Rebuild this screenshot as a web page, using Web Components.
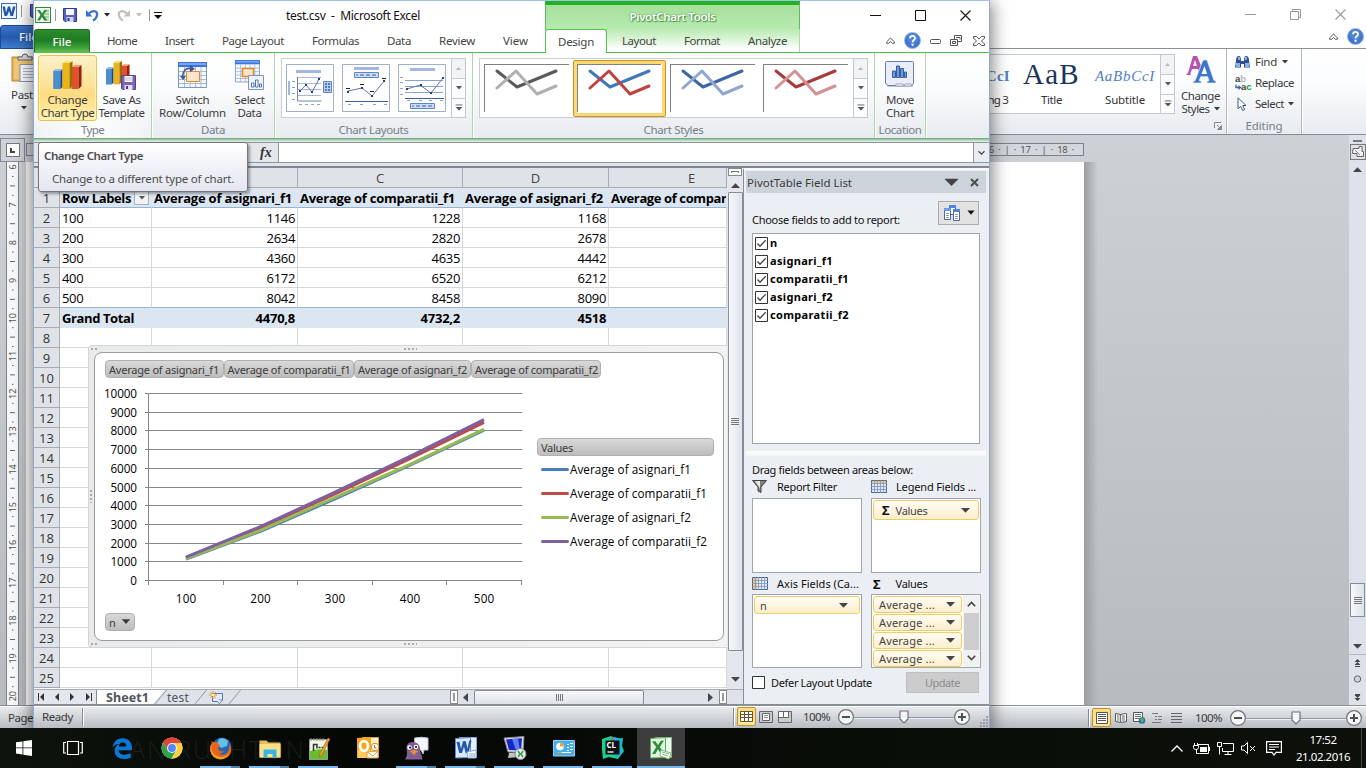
<!DOCTYPE html>
<html lang="en">
<head>
<meta charset="utf-8">
<title>test.csv - Microsoft Excel</title>
<style>
html,body{margin:0;height:100%;overflow:hidden;background:#000;font-family:"Noto Sans","Open Sans",sans-serif;font-size:11.5px;color:#3b3b3b}
</style>
</head>
<body>
<desktop-shell></desktop-shell>
<script>
const fits=[];
function def(name,css,html,setup){
  customElements.define(name,class extends HTMLElement{
    constructor(){
      super();
      const r=this.attachShadow({mode:"open"});
      const t=document.createElement("template");
      t.innerHTML="<style>*{box-sizing:border-box}"+css+"</style>"+(typeof html==="function"?html(this):html);
      r.appendChild(t.content.cloneNode(true));
      if(setup)setup(this,r);
    }
  });
}
/* label whose tracking is adjusted to a given width */
customElements.define("fit-text",class extends HTMLElement{
  constructor(){super();this.attachShadow({mode:"open"}).innerHTML="<style>:host{display:inline-block;white-space:pre;flex:none}</style><slot></slot>";}
  connectedCallback(){fits.push(this);}
});
const T=(w,s,st="")=>`<fit-text w="${w}" style="${st}">${s}</fit-text>`;

/* ---------- icons ---------- */
const bars3=(x,y,s)=>`<g transform="translate(${x} ${y}) scale(${s})"><path d="M0 11l3-2h6l-2 2v18H0z" fill="#3f74b5"/><path d="M0 11h7v18H0z" fill="#4d8ed0"/><path d="M7 11l2-2v18l-2 2z" fill="#1f4778"/><path d="M0 11l2-2h7l-2 2z" fill="#8ec0ee"/><path d="M18 7h7v22h-7z" fill="#e2502f"/><path d="M25 7l3-2v21l-3 3z" fill="#9a1e0c"/><path d="M18 7l3-2h7l-3 2z" fill="#f79a7c"/><path d="M9 3h7v26H9z" fill="#eab416"/><path d="M16 3l3-2v25l-3 3z" fill="#9c6d02"/><path d="M9 3l3-2h7l-3 2z" fill="#fbe070"/></g>`;
const tableIc=(x,y)=>`<g transform="translate(${x} ${y})"><path d="M.5.5h28v25h-28z" fill="#f6f9fe" stroke="#7c96bf"/><path d="M0 0h29v5H0z" fill="#3b74dc"/><path d="M1 1h27v2H1z" fill="#78a6f2"/><path d="M1 9.5h27M1 13.5h27M1 17.5h27M1 21.5h27M6.500 5v20M12 5v20M17.500 5v20M23 5v20" stroke="#a9bad4"/></g>`;
const I={
excel:[16,16,`<rect x=".5" y=".5" width="15" height="15" fill="#f4faf2" stroke="#2f8a3b"/><path d="M9 2h5v12H9z" fill="#d2ead0"/><path d="M10 4h4M10 7h4M10 10h4" stroke="#83bb83"/><path d="M2 3h3l2 3.500L9.500 3H12L8.500 8l4 5.500H9.300L7 10l-2.200 3.500H2L5.500 8z" fill="#2c8b37"/>`],
word:[16,16,`<rect x=".5" y=".5" width="15" height="15" fill="#eef5fe" stroke="#3a6fb8"/><path d="M1.500 3.500H4l1 6 2-6h2l1.500 6 1.500-6h2.500L12 13H9.500L8 8l-2 5H3.500z" fill="#2359a8"/>`],
save:[14,14,`<path d="M.5.5h13v13H2L.5 12z" fill="#5a5fc4" stroke="#34368f"/><path d="M3 1h8v6H3z" fill="#f3f6fd"/><path d="M3.500 9h7v5h-7z" fill="#cdd2ee"/><path d="M4.500 10h2v3h-2z" fill="#33368a"/>`],
undo:[13,12,`<path d="M3 4.500C7 .5 12 2 11 6.500 10.500 9 9 10.500 7 11.500" fill="none" stroke="#3d6fcf" stroke-width="2.200"/><path d="M0 1v6.500h6.500z" fill="#3d6fcf"/>`],
redo:[13,12,`<path d="M10 4.500C6 .5 1 2 2 6.500 2.500 9 4 10.500 6 11.500" fill="none" stroke="#c0c0c0" stroke-width="2.200"/><path d="M13 1v6.500H6.500z" fill="#c0c0c0"/>`],
dn:[6,4,`<path d="M0 0h6L3 3.500z" fill="currentColor"/>`],
dnw:[9,5,`<path d="M0 0h9L4.500 4.800z" fill="currentColor"/>`],
up:[9,5,`<path d="M0 5h9L4.500 .2z" fill="currentColor"/>`],
lf:[5,9,`<path d="M5 0v9L0 4.500z" fill="#444"/>`],
rt:[5,9,`<path d="M0 0v9l5-4.500z" fill="#444"/>`],
qat:[8,7,`<path d="M0 .5h8" stroke="currentColor"/><path d="M0 3h8L4 7z" fill="currentColor"/>`],
min:[11,11,`<path d="M0 5.500h11" stroke="currentColor"/>`],
max:[11,11,`<path d="M.5.5h10v10H.5z" fill="none" stroke="currentColor"/>`],
restore:[11,11,`<path d="M.5 2.500h8v8h-8zM2.500 2.500v-2h8v8h-2" fill="none" stroke="currentColor"/>`],
close:[11,11,`<path d="M.5.5l10 10M10.500.5L.5 10.500" stroke="currentColor" stroke-width="1.100"/>`],
chev:[9,7,`<path d="M.7 4.800L4.500 1l3.800 3.800v1.500H6.300L4.500 4.500 2.700 6.300H.7z" fill="#fff" stroke="#555"/>`],
help:[17,17,`<circle cx="8.500" cy="8.500" r="8" fill="#3f75cd" stroke="#9ab8e6"/><circle cx="8.500" cy="6.500" r="5.500" fill="#5c8fe0" opacity=".6"/><path d="M6 6.300C6 3 11 3 11 6.200 11 8 8.600 8 8.600 10.300" fill="none" stroke="#fff" stroke-width="1.800"/><circle cx="8.600" cy="12.800" r="1.200" fill="#fff"/>`],
mmin:[11,5,`<rect x=".5" y=".5" width="10" height="4" rx="1" fill="#fff" stroke="#555"/>`],
mrest:[12,11,`<path d="M4.500.5h7v6h-7z" fill="#fff" stroke="#555"/><path d="M6 2.500h4v2" fill="none" stroke="#555"/><path d="M.5 4.500h7v6h-7z" fill="#fff" stroke="#555"/><path d="M2.500 6.500h3v2h-3z" fill="none" stroke="#555"/>`],
mclose:[12,10,`<path d="M.5.5h3l2.500 2.500L8.500.5h3v1.500L8.500 5l3 3v1.500h-3L6 7 3.500 9.500h-3V8l3-3-3-3z" fill="#fff" stroke="#555"/>`],
chart:[29,30,bars3(.5,0,1)],
template:[31,31,bars3(0,0,.84)+`<path d="M15.500 15.500h14v14h-13l-1-1z" fill="#7a63b5" stroke="#594391"/><path d="M18.500 16h8v6h-8z" fill="#fff"/><path d="M19 18h7M19 20h7" stroke="#bbb"/><path d="M18.500 25h8v5h-8z" fill="#e4e0ef"/><path d="M20 26h2v3h-2z" fill="#4c3a84"/>`],
switch:[30,28,tableIc(0,1)+`<path d="M8.500 10.500h13v10h-13z" fill="#fce5cb" stroke="#e08a36"/><path d="M4.500 16C5 9 9 6 14 8" fill="none" stroke="#34599c" stroke-width="1.500"/><path d="M2 15h6l-3 4zM12 4l5 4-5 3z" fill="#34599c"/>`],
select:[30,31,`<g transform="scale(.86)">${tableIc(0,0)}</g><path d="M7.500 8.500h11v8h-11z" fill="#fce5cb" stroke="#e08a36" stroke-width="1.500"/><path d="M13.500 15.500h15v14h-15z" fill="#eef3fb" stroke="#8393b5"/><path d="M16.500 27v-4h2.500v4zM20.500 27v-7H23v7zM24.500 27v-3h2v3z" fill="#fff" stroke="#4b74b5"/>`],
move:[30,29,`<path d="M2 24.500h26" stroke="#c4c8d2" stroke-width="3"/><path d="M.5 1.500q0-1 1-1h26q1 0 1 1v21l-2 2H3l-2.500-2z" fill="#e8eefb" stroke="#6d7c9c"/><path d="M10 25l1-2h7l1 2zM19 25l1-2h6l1 1-1 1z" fill="#fff" stroke="#8591aa" stroke-width=".8"/><path d="M7.500 16.500V10h3v6.500zM11.500 16.500V5h3v11.500zM15.500 16.500V7.500h3v9zM19.500 16.500V11h2v5.500z" fill="#6f9be0" stroke="#3a5c9c"/>`],
filter:[15,13,`<path d="M.5.500h14L9 7v5.500L6 11V7z" fill="#7e7e7e" stroke="#444"/><path d="M3 1h5v8L7 7z" fill="#e8e8e8"/>`],
cols:[16,13,`<path d="M.5.5h15v12H.5z" fill="#dfe9f9" stroke="#49648f"/><path d="M1 1h14v3H1z" fill="#f7c97c"/><path d="M0 3.500h16M0 6.500h16M0 9.500h16M3.500 0v13M6.500 0v13M9.500 0v13M12.500 0v13" stroke="#7a94bd" stroke-width=".8"/>`],
rows:[16,13,`<path d="M.5.5h15v12H.5z" fill="#dfe9f9" stroke="#49648f"/><path d="M1 1h4v11H1z" fill="#f7c97c"/><path d="M0 3.500h16M0 6.500h16M0 9.500h16M3.500 0v13M6.500 0v13M9.500 0v13M12.500 0v13" stroke="#7a94bd" stroke-width=".8"/>`],
fields:[16,16,`<path d="M5.500.5h6v9h-6z" fill="#fff" stroke="#50678f"/><path d="M5 0h7v3H5z" fill="#4d84e0"/><path d="M.5 3.500h6v11h-6z" fill="#fff" stroke="#50678f"/><path d="M0 3h7v3H0z" fill="#6a98ea"/><path d="M9.500 4.500h6v11h-6z" fill="#fff" stroke="#50678f"/><path d="M9 4h7v3H9z" fill="#4d84e0"/><path d="M2 8.500h3M2 10.500h3M2 12.500h3M11 9.500h3M11 11.500h3M11 13.500h3" stroke="#8a9cc0"/>`],
px:[9,9,`<path d="M1 1l7 7M8 1L1 8" stroke="#4c4c4c" stroke-width="2"/>`],
first:[7,8,`<path d="M.5 0v8" stroke="#333"/><path d="M6 0v8L2 4z" fill="#333"/>`],
prev:[7,8,`<path d="M5 0v8L1 4z" fill="#333"/>`],
next:[7,8,`<path d="M1 0v8l4-4z" fill="#333"/>`],
last:[7,8,`<path d="M6.500 0v8" stroke="#333"/><path d="M1 0v8l4-4z" fill="#333"/>`],
vgrid:[13,11,`<path d="M.5.5h12v10H.5z" fill="#fff" stroke="#65532a"/><path d="M0 3.500h13M0 6.500h13M4.500 0v11M8.500 0v11" stroke="#65532a"/>`],
vpage:[14,12,`<path d="M.5.500h13v11H.5z" fill="#c9cbce" stroke="#666"/><path d="M3.500 2.500h7v7h-7z" fill="#fff" stroke="#666"/><path d="M5 4.500h4M5 6.500h4" stroke="#888"/>`],
vbreak:[14,12,`<path d="M.5.500h13v11H.5z" fill="#c9cbce" stroke="#666"/><path d="M1 1h4v5H1zM6 1h4v5H6z" fill="#fff"/><path d="M5.500 0v6.500H0M10.500 0v6.500h-5" fill="none" stroke="#666"/>`],
wprint:[12,12,`<path d="M.5.500h11v11H.5z" fill="#fff" stroke="#555"/><path d="M2 2.500h8M2 4.500h8M2 6.500h8M2 8.500h8" stroke="#555"/>`],
wread:[12,11,`<path d="M.5 1.500l5 1 5-1 1 0v8l-6 1-5-1zM5.700 2v8" fill="#fff" stroke="#555"/><path d="M2 4h2.500M2 6h2.500M2 8h2.500M7 4h3M7 6h3M7 8h3" stroke="#666"/>`],
wweb:[13,12,`<path d="M.5.500h9v9h-9z" fill="#fff" stroke="#555"/><path d="M2 2.500h6M2 4.500h6M2 6.500h4" stroke="#666"/><circle cx="9" cy="8.500" r="3.300" fill="#2b6fae"/><path d="M7 7l3-1 1 2-2 3z" fill="#6ab04c"/>`],
wout:[11,10,`<path d="M0 .5h6M3 3.500h2M6 3.500h4M3 6.500h2M6 6.500h4M0 9.500h9" stroke="#777"/>`],
wdraft:[11,10,`<path d="M0 .5h11M0 3.500h11M0 6.500h11M0 9.500h11" stroke="#666" stroke-width="1.200"/>`],
paste:[31,31,`<path d="M1 4h26v24H1z" fill="#e9b65c" stroke="#b98332"/><path d="M3 6h22v20H3z" fill="#f3c878"/><path d="M7 4h4q0-3 3-3t3 3h4v3H7z" fill="#d8dbe0" stroke="#666"/><path d="M9 11.500h20v17H9z" fill="#fff" stroke="#8694ae"/><path d="M12 15.500h14M12 18.500h14M12 21.500h14M12 24.500h14" stroke="#a9b9d6"/>`],
styles:[30,28,`<path d="M0 19h5l-.6-1.500L6 13h6l2 6h5L11 0H7L2 17z" fill="#b850b0"/><path d="M7 10l2-6 2 6z" fill="#fff"/><path d="M7 27v-1.500l2-.7L17 4h4l7 20.500 2 .5v2h-9v-1.700l2-.6-1.300-4H14.700l-1.500 4 2.300.7V27z" fill="#3f77c8" stroke="#e6effb" stroke-width=".7"/><path d="M15.500 18l3-8 2.600 8z" fill="#fff"/>`],
find:[15,13,`<path d="M1 6q0-5 3-5 2 0 2 5h3q0-5 2-5 3 0 3 5l1 6.500H9V9H6v3.500H0z" fill="#2c4d8f"/><path d="M1 8h4v4H1zM10 8h4v4h-4zM3 2h2v3H3zM10 2h2v3h-2z" fill="#8fb1e6"/>`],
repl:[16,16,`<path d="M1 9.500v3h4" fill="none" stroke="#3a5fa8" stroke-width="1.300"/><path d="M3.500 10l3 2.500-3 2.500z" fill="#3a5fa8"/><text x="0" y="7" font-family="Liberation Sans" font-weight="bold" font-size="9.500" fill="#444">a<tspan fill="#b5b5b5">b</tspan></text><text x="6" y="15" font-family="Liberation Sans" font-weight="bold" font-size="9.500" fill="#444">a<tspan fill="#2a9a33">c</tspan></text>`],
sel:[10,14,`<path d="M1 .8v11l2.700-2.500 2 4.200 2-1-2-4H9z" fill="#fff" stroke="#41587f"/>`],
launch:[8,8,`<path d="M.5 6V.5H7" fill="none" stroke="#888"/><path d="M3 3l3 3M7.500 3.500v4h-4z" stroke="#888" fill="#888"/>`],
wobj:[12,12,`<path d="M1 2.500h6v-2h3v5h1.500v5H5v-3H.5z" fill="#f6eef0" stroke="#666"/><path d="M3 4l5 5" stroke="#888"/>`],
newsheet:[15,13,`<path d="M3.500 2.500h10v7l-3 3-2-2h-5z" fill="#dfe9fa" stroke="#5c78a8"/><path d="M9 8h4v3z" fill="#aab7ce"/><path d="M4 0v8M0 4h8M1.200 1.200l5.600 5.600M6.800 1.200L1.200 6.800" stroke="#e4952c"/><circle cx="4" cy="4" r="1.300" fill="#fff4b0"/>`],
start:[16,16,`<path d="M0 2.300L6.500 1.400v6.100H0zM7.300 1.300L16 0v7.500H7.300zM0 8.300h6.500v6.200L0 13.600zM7.300 8.300H16V16l-8.700-1.300z" fill="#fff"/>`],
taskview:[20,14,`<path d="M4.500.500h11v13h-11zM3 1.500H.700v10.500H3M17 1.500h2.300v10.500H17" fill="none" stroke="#fff" stroke-width="1.200"/>`],
edge:[20,21,`<path d="M.5 9.500C1.500 3.500 5.500.3 10.500.3 16.500.3 20 4.500 20 10v2.300H6.600c.2 3 2.700 4.500 5.900 4.500 2.200 0 4.300-.6 6.200-1.700v4.300C16.700 20.500 14.400 21 12 21 6.500 21 2.600 17.800 2.600 13 2.600 9.800 4.400 7.300 7 6 4.200 6 2 7.200.5 9.500zM6.800 8.600h7.600c0-2.500-1.300-4-3.700-4-2.200 0-3.600 1.500-3.900 4z" fill="#0a78d7"/>`],
chrome:[22,22,`<circle cx="11" cy="11" r="10.500" fill="#fff"/><path d="M11 .5A10.500 10.500 0 0 0 1.900 5.700L6.500 13.500 11 6h9.200A10.500 10.500 0 0 0 11 .5z" fill="#e04537"/><path d="M1.900 5.700A10.500 10.500 0 0 0 10.500 21.500L15.400 13.500H6.600z" fill="#2da24c"/><path d="M20.200 6H11l4.500 7.500-5 8A10.500 10.500 0 0 0 20.200 6z" fill="#fbd03b"/><circle cx="11" cy="11" r="5" fill="#f3f3f3"/><circle cx="11" cy="11" r="3.900" fill="#4c8bf5"/>`],
firefox:[22,22,`<circle cx="12" cy="10" r="9.500" fill="#2467b0"/><path d="M9 2q5-2 9 2l-1 5-6 2-4-4z" fill="#68bfe6"/><path d="M1 4q3 2 7 1-1 2 2 3l-2 3q1 4 6 3-2 3-5 2 4 4 8 0 3-4 2-9 3 4 2 8-2 7-10 7Q1 21.500.300 13 0 8 2 6z" fill="#e8641a"/><path d="M1.500 7q-1 9 5 12 8 3 13-3-4 8-12 6Q-1 19 .5 9z" fill="#f7a11b"/>`],
folder:[22,19,`<path d="M.5 1.500h7l2 2h12v15h-21z" fill="#e5bd54"/><path d="M.5 5h21v13.500h-21z" fill="#fbe08c"/><path d="M4.500 18.500v-7q0-1 1-1h11q1 0 1 1v7h-4v-3.500h-5v3.500z" fill="#35b4e8"/>`],
npp:[22,23,`<path d="M1.500 2.500h18v20h-18z" fill="#eef6e2" stroke="#999"/><path d="M2 14q8-3 17-1v9H2z" fill="#69bd2c"/><path d="M3 1v3M6 1v3M9 1v3M12 1v3M15 1v3" stroke="#888"/><path d="M5.500 7v7M5 7.500h4v4M10.500 10.500h2M13.500 10.500h2" stroke="#333" stroke-width="1.500" fill="none"/><path d="M20 1l2 1-8 16-2.500 2 .3-3.500z" fill="#f3a233" stroke="#965a10" stroke-width=".6"/>`],
outlook:[22,22,`<path d="M5.500.500h16v20h-16z" fill="#fdf1d0" stroke="#e0a030"/><path d="M0 1l14-1v21L0 21z" fill="#f5a81c"/><path d="M1 13h12v8H1z" fill="#fcc95c"/><ellipse cx="7" cy="9" rx="4" ry="4.800" fill="none" stroke="#fff" stroke-width="2.800"/><circle cx="18" cy="10" r="3.800" fill="#fff" stroke="#d98a18"/><path d="M17.500 8v3h2" stroke="#c57410" fill="none"/><path d="M10 15l11-1v7H10z" fill="#fff" stroke="#e0a030"/><path d="M10 15l6 4 5-5" fill="none" stroke="#e0a030"/>`],
pidgin:[24,23,`<path d="M9.500 1q7-1.500 13.500 0v12l-4 0-1 4-2-4H10z" fill="#f4f7fb" stroke="#bcc4d0"/><path d="M1.500 12Q1 5 7.500 5t7.500 6q0 5 1.500 7l1 4.500H0Q3 18 1.500 12z" fill="#7f5f94"/><circle cx="4.500" cy="10.500" r="2.200" fill="#fff"/><circle cx="11" cy="10" r="2.200" fill="#fff"/><circle cx="5" cy="10.500" r="1"/><circle cx="11" cy="10" r="1"/><path d="M5 14l5-1 3 1-4 4z" fill="#f0912d"/>`],
wordbig:[22,22,`<path d="M4.500.500h17v20h-17z" fill="#e8f0fc" stroke="#86a9da"/><path d="M.5 1.500l15-1v20l-15 .5z" fill="#dbe8fa" stroke="#5a8ccb"/><path d="M1.500 5l3-.3 1.500 7 2-7.400 2.600-.2 2 7.300 1.600-7.800h2.400L13.500 16l-2.800.2L9 9.500 7 16H4.200z" fill="#2258ab"/><path d="M12 15l9-2v8h-8z" fill="#fff" stroke="#86a9da"/><path d="M14 17h6M14 19h6" stroke="#86a9da"/>`],
putty:[24,24,`<path d="M1 2l20-1.500-1 16L5 16z" fill="#d8dce4" stroke="#888"/><path d="M3 3.500l16-1.300-1 12.300-12-.5z" fill="#1428c8"/><path d="M9 3l6-.5 2 12-4-.2z" fill="#5e7ef2"/><path d="M6 17l8 0 2 4-11 1z" fill="#bfc3c8"/><circle cx="17.500" cy="18" r="5.500" fill="#e6e8ea" stroke="#888"/><path d="M15 15l2 3-2 3M20 15l-2 3 2 3" stroke="#31a347" stroke-width="1.500" fill="none"/>`],
cpanel:[22,17,`<path d="M.5.500h21v15.500H.5z" fill="#48aee8" stroke="#8dd0f5"/><circle cx="7" cy="6.500" r="3.800" fill="#fff"/><path d="M7 6.500V2.700a3.800 3.800 0 0 1 3.800 3.800z" fill="#f2a23a"/><path d="M14 4.500h2M14 7.500h2M14 10.500h2M17 3.500h3M17 6.500h3M17 9.500h3M4 12.500h14" stroke="#fff"/><path d="M4 12.500h5" stroke="#f2a23a"/>`],
clion:[24,24,`<path d="M1 3l9-3 6 3 6-1-1 8 2 5-6 8-9-2-6 2-1-9z" fill="#1fd08d"/><path d="M13 1l8 2-1 9 2 4-6 6-3-4z" fill="#16b5e4"/><path d="M10 0l3 4-2 2z" fill="#ea3a8c"/><path d="M4.500 4.500h14v14h-14z" fill="#111"/><path d="M6.500 16h6" stroke="#fff" stroke-width="1.300"/><text x="5.500" y="12" font-family="Open Sans,sans-serif" font-weight="bold" font-size="8" fill="#fff">CL</text>`],
excelbig:[22,22,`<path d="M5.500.500h16v20h-16z" fill="#edf7ea" stroke="#7fbd84"/><path d="M.5 1.500l15-1v20l-15 .5z" fill="#e2f2df" stroke="#5aa864"/><path d="M2 4.500l3.500-.3 2.500 4 2.700-4.400L14 3.600 9.800 10l4.500 6.500-3.500.2L8 12.200 5.300 17H2l4.300-7z" fill="#2c8b37"/><path d="M11 13l10 3-2 6-9-3z" fill="#fff" stroke="#7fbd84"/><path d="M12 15l7 2M12 17l6 2" stroke="#7fbd84"/>`],
tup:[12,7,`<path d="M.5 6.500L6 1l5.500 5.500" fill="none" stroke="#fff" stroke-width="1.300"/>`],
batt:[17,13,`<path d="M7 5h7v5H7z" fill="#fff"/><path d="M4.500 2.500h11v9h-9" fill="none" stroke="#fff"/><path d="M16.500 5v4" stroke="#fff"/><path d="M.5 3.500h5v2q0 2-2.500 2t-2.500-2zM1.500 1v2M4.500 1v2M3.500 7.500v4h3" stroke="#fff" fill="#000"/>`],
net:[17,13,`<path d="M6 1.500h10.500v8H5.500V6M11 9.500v3M7.500 12.500h7" stroke="#fff" fill="none"/><path d="M.5.500h4v4h-4zM2.500 4.500v8" stroke="#fff" fill="none"/>`],
vol:[15,12,`<path d="M.5 4h2.500l3.500-3.500v11L3 8H.5z" fill="none" stroke="#fff"/><path d="M9 4l5 5M14 4L9 9" stroke="#fff"/>`],
act:[16,15,`<path d="M.6.600h14.800v10.800H10L8 14l-2-2.600H.600z" fill="none" stroke="#fff" stroke-width="1.200"/><path d="M3 3.500h10M3 6h10M3 8.500h6" stroke="#fff"/>`],
chk:[13,13,`<path d="M.5.500h12v12H.5z" fill="#fff" stroke="#333"/><path d="M2.500 6.500L5 9.200l5.700-6" fill="none" stroke="#444" stroke-width="1.300"/>`],
box:[13,13,`<path d="M.5.500h12v12H.5z" fill="#fff" stroke="#333"/>`],
cup:[9,6,`<path d="M.8 5.200L4.500 1.500l3.700 3.700" fill="none" stroke="#444" stroke-width="1.600"/>`],
cdn:[9,6,`<path d="M.8.800l3.700 3.700L8.200.8" fill="none" stroke="#444" stroke-width="1.600"/>`],
grip:[10,11,`<path d="M8 1h2M5 4h2M8 4h2M2 7h2M5 7h2M8 7h2M2 10h2M5 10h2M8 10h2" stroke="#8d939c" stroke-width="1.500"/>`],
hgrip:[7,7,`<path d="M.5 0v7M2.500 0v7M4.500 0v7M6.500 0v7" stroke="#777"/>`],
vgrip:[8,7,`<path d="M0 .5h8M0 2.500h8M0 4.500h8M0 6.500h8" stroke="#777"/>`],
l1:[48,48,`<path d="M.5.500h47v47H.5z" fill="#fff" stroke="#9fb0cb"/><path d="M10 6h25v3H10z" fill="#a4b8df"/><path d="M2 17h2v14H2z" fill="#a4b8df"/><path d="M6 17.500h3M6 23.500h3M6 29.500h3M6 35.500h3M13 40.500h3M19 40.500h3M25 40.500h3M31 40.500h3" stroke="#8aa2cf"/><path d="M12 13.500h23M12 19.500h23M12 25.500h23M12 31.500h23" stroke="#a9b9d6"/><path d="M11.500 13v24h24" fill="none" stroke="#6f84ad"/><path d="M37.500 17.500h8v11h-8z" fill="#bcd0f2" stroke="#5d84cc"/><path d="M39 20h2M42 20h2M39 23h2M42 23h2M39 26h2M42 26h2" stroke="#345ca8" stroke-width="1.300"/><path d="M14 27l6-6 6 7 7-13" fill="none" stroke="#5771a3"/><path d="M13 26h2v2h-2zM19 20h2v2h-2zM25 27h2v2h-2zM32 14h2v2h-2z" fill="#213d78"/>`],
l2:[48,48,`<path d="M.5.500h47v47H.5z" fill="#fff" stroke="#9fb0cb"/><path d="M12 3h25v3H12z" fill="#a4b8df"/><path d="M12.500 8.500h24v5h-24z" fill="#cfdef6" stroke="#5d84cc"/><path d="M14 11h2M18 11h4M24 11h4M30 11h4" stroke="#345ca8"/><path d="M3 37.500h43" stroke="#3f5f9d"/><path d="M6 40.500h3M18 40.500h3M31 40.500h3M42 40.500h3" stroke="#8aa2cf"/><path d="M6 27l14-3 10 8 12-15" fill="none" stroke="#6077a8"/><path d="M4 24.500h4M18 20.500h4M28 27.500h4M40 14.500h4" stroke="#222"/><path d="M5 27h2v2H5zM19 23h2v2h-2zM29 31h2v2h-2zM41 16h2v2h-2z" fill="#213d78"/>`],
l3:[48,48,`<path d="M.5.500h47v47H.5z" fill="#fff" stroke="#9fb0cb"/><path d="M12 4h25v3H12z" fill="#a4b8df"/><path d="M2 13.500h3M2 18.500h3M2 24.500h3M2 30.500h3M9 36.500h3M21 36.500h3M31 36.500h3M42 36.500h3" stroke="#8aa2cf"/><path d="M7 16.500h38M7 22.500h38M7 28.500h38" stroke="#8aa2cf"/><path d="M7 34.500h39" stroke="#3f5f9d"/><path d="M12.500 39.500h24v5h-24z" fill="#cfdef6" stroke="#5d84cc"/><path d="M14 42h2M18 42h4M24 42h4M30 42h4" stroke="#345ca8"/><path d="M9 25l13-4 11 8 12-15" fill="none" stroke="#6077a8"/><path d="M8 24h2v2H8zM22 20h2v2h-2zM32 28h2v2h-2zM44 13h2v2h-2z" fill="#213d78"/>`],
};
def("ui-icon",":host{display:inline-flex;flex:none}svg{display:block;overflow:visible}",h=>{
  const [w,ht,b]=I[h.getAttribute("name")];
  return `<svg width="${w}" height="${ht}" viewBox="0 0 ${w} ${ht}">${b}</svg>`;});
const ic=(n,st="")=>`<ui-icon name="${n}" style="${st}"></ui-icon>`;
const slotted=n=>`<ui-icon slot="i" name="${n}"></ui-icon>`;

/* ---------- shared controls ---------- */
def("zoom-slider",":host{display:block;width:132px;height:18px;flex:none}svg{display:block}",
`<svg width="132" height="18"><path d="M16 9.500h100" stroke="#8d96a5"/><path d="M16 10.500h100" stroke="#eef0f3"/><g fill="#f4f5f7" stroke="#70757d" stroke-width="1.200"><circle cx="8" cy="9" r="7.400"/><circle cx="124" cy="9" r="7.400"/><path d="M62 3h8v8l-4 4-4-4z"/></g><path d="M4 9h8M120 9h8M124 5v8" stroke="#505050" stroke-width="2"/></svg>`);
def("view-toggle",":host{display:flex;align-items:center;justify-content:center;width:19px;height:19px;flex:none}:host([on]){border:1px solid #c2912e;border-radius:2px;background:linear-gradient(#fdd978,#ffefa0);box-shadow:inset 0 0 0 1px #fbe08f}","<slot></slot>");
def("gallery-scroll",":host{display:grid;grid-template-rows:repeat(3,1fr);width:15px;border:1px solid #c5c8cc;flex:none;color:#555}div{display:flex;align-items:center;justify-content:center;background:#fbfcfd}div+div{border-top:1px solid #c5c8cc}",
`<div style="background:#f1f3f5">${ic("up","color:#bbb;transform:scale(.6)")}</div><div>${ic("dn")}</div><div>${ic("qat","transform:scale(.85)")}</div>`);
def("ribbon-group",`:host{display:grid;grid-template-rows:1fr 15px;border-right:1px solid var(--sep,#a9d8ae);box-shadow:1px 0 #fff;padding-bottom:1px;flex:none}
.c{display:flex;min-width:0}.l{display:flex;align-items:center;justify-content:center;color:#767e88}`,
h=>`<div class="c"><slot></slot></div><div class="l">${T(h.getAttribute("lw"),h.getAttribute("label"))}</div>`);
def("big-button",`:host{display:flex;flex-direction:column;align-items:center;height:66px;flex:none;color:#3c3c3c;line-height:13px;padding-top:3px;border:1px solid transparent}
:host([hot]){border-color:#e9c14d;border-radius:3px;background:linear-gradient(#fdf1c9,#fde298 45%,#fddb80 60%,#fff2b0);box-shadow:inset 0 0 0 1px #fff0b8}
.i{height:32px;display:flex;align-items:center;justify-content:center;margin-bottom:2px}`,`<div class="i"><slot name="i"></slot></div><slot></slot>`);

/* ---------- excel ribbon ---------- */
def("excel-titlebar",`:host{display:grid;grid-template-columns:511px 255px 1fr;height:28px;background:#fff;color:#111;flex:none}
.q{display:flex;align-items:center;padding:2px 0 2px 1px}.s{width:1px;height:12px;background:#9a9a9a}
.ctx{border-top:4px solid #23b023;border-left:1px solid #59bf59;border-right:1px solid #59bf59;background:linear-gradient(#a5e09c,#b8eab0);color:#fff;display:flex;align-items:center;justify-content:center;padding-bottom:2px;text-shadow:0 0 2px #3a8a3a,1px 1px 1px #4a9a4a}
.w{display:flex;align-items:center;justify-content:flex-end;gap:34px;padding:0 18px 0 0}`,
`<div class="q">${ic("excel")}<span class="s" style="margin:0 7px 0 4px"></span>${ic("save")}${ic("undo","margin-left:9px")}${ic("dn","margin-left:5px;color:#222")}${ic("redo","margin-left:7px")}${ic("dn","margin-left:6px;color:#bbb")}<span class="s" style="margin:0 4px 0 7px"></span>${ic("qat")}
${T(134,"test.csv  -  Microsoft Excel","margin-left:124px;font-size:12px")}</div><div class="ctx">${T(86,"PivotChart Tools","font-weight:600;font-size:11.5px")}</div><div class="w">${ic("min")}${ic("max")}${ic("close")}</div>`);
def("excel-tabs",`:host{display:flex;height:24px;background:#fff;border-bottom:1px solid #4cc14c;flex:none;font-size:11.5px;color:#444}
div{display:flex;align-items:center;padding:0 14px}.file{width:56px;margin-right:3px;padding:0;justify-content:center;background:linear-gradient(#2e8b2e,#1d7b22 45%,#3fa03a 80%,#64bf4e);border:1px solid #1b6b20;border-bottom:0;border-radius:3px 3px 0 0;color:#fff}
.on{height:24px;border:1px solid #4cc14c;border-bottom:0;border-radius:3px 3px 0 0;background:#fff;padding:0 12px}.ctx{padding:0;border-right:1px solid #a9dda4;background:linear-gradient(#b8eab0,#fff 90%);width:255px;margin-left:3px}.m{flex:1;justify-content:flex-end;padding:0 4px 0 0;gap:12px}`,
`<div class="file">${T(19,"File","font-weight:500")}</div>`+[["Home",30],["Insert",29],["Page Layout",62],["Formulas",47],["Data",24],["Review",36],["View",25]].map(a=>`<div>${T(a[1],a[0])}</div>`).join("")+
`<div class="ctx"><div class="on">${T(36,"Design")}</div><div style="padding-left:15px">${T(34,"Layout")}</div><div>${T(36,"Format")}</div><div>${T(39,"Analyze")}</div></div><div class="m">${ic("chev","margin-right:-3px")}${ic("help","")}${ic("mmin","margin:2px -3px 0 -3px")}${ic("mrest","margin-right:-1px")}${ic("mclose")}</div>`);
def("style-tile",`:host{display:block;width:85px;height:48px;flex:none;border-left:1px solid #808080;border-top:1px solid #808080}
svg{display:block}`,h=>{const[a,b]=h.getAttribute("c").split(" ");
return `<svg width="83" height="47" fill="none" stroke-width="3" stroke-linecap="round" stroke-linejoin="round"><path d="M12 6l20 16 39-16" stroke="${a}"/><path d="M12 23l19-17 21 23 19-8" stroke="${b}"/></svg>`});
def("excel-ribbon",`:host{display:flex;height:86px;flex:none;background:linear-gradient(#fff,#fbfcfd 40%,#e9ecf0 95%);border-bottom:1px solid #7fa986;box-shadow:0 1px #8fd098,0 2px #c5dcca;position:relative;z-index:1}
.g{display:flex;border:1px solid #c9cdd2;border-right:0;height:60px;background:#fff}
.sel{width:93px;height:57px;margin:1px 3px 0 4px;border:1px solid #c6912b;border-radius:2px;padding:3px 0 0 3px;background:#fff;box-shadow:inset 0 0 0 3px #fdd975}`,
`<ribbon-group label="Type" lw="23" style="width:118px;background:radial-gradient(ellipse at 50% 120%,#fff,transparent)"><big-button hot style="margin:2px 0 0 4px;width:59px">${slotted("chart")}${T(40,"Change")}${T(53.500,"Chart Type")}</big-button>
<big-button style="margin:2px 0 0 1px;width:47px">${slotted("template")}${T(38,"Save As")}${T(46,"Template")}</big-button></ribbon-group>
<ribbon-group label="Data" lw="24" style="width:123px"><big-button style="margin:2px 0 0 5px;width:71px">${slotted("switch")}${T(34,"Switch")}${T(67,"Row/Column")}</big-button>
<big-button style="margin:2px 0 0 0;width:43px">${slotted("select")}${T(30,"Select")}${T(24,"Data")}</big-button></ribbon-group>
<ribbon-group label="Chart Layouts" lw="70" style="width:198px"><div class="g" style="margin:5px 0 0 6px;width:170px;padding:5px 0 0 4px;gap:8px">${ic("l1","height:48px")}${ic("l2","height:48px")}${ic("l3","height:48px")}</div><gallery-scroll style="margin-top:5px;height:60px"></gallery-scroll></ribbon-group>
<ribbon-group label="Chart Styles" lw="60" style="width:402px"><div class="g" style="margin:5px 0 0 6px;width:374px;padding:0 0 0 4px"><style-tile style="margin-top:5px" c="#5a5a5a #b0b0b0"></style-tile><div class="sel"><style-tile style="width:84px" c="#4277b8 #be4340"></style-tile></div><style-tile style="margin:5px 8px 0 1px" c="#3c67a4 #8ea6d0"></style-tile><style-tile style="margin-top:5px" c="#a83c3a #d39192"></style-tile></div><gallery-scroll style="margin-top:5px;height:60px"></gallery-scroll></ribbon-group>
<ribbon-group label="Location" lw="43" style="width:51px"><big-button style="margin:2px 0 0 0;width:50px">${slotted("move")}${T(28,"Move")}${T(28,"Chart")}</big-button></ribbon-group>`);
def("formula-bar",`:host{display:grid;grid-template-columns:245px 1fr 16px;height:29px;flex:none;padding-top:3px;background:#dfe3ea;border-bottom:2px solid #808790}
div{height:21px;border-top:1px solid #8f959d;border-bottom:1px solid #8f959d}.f{display:flex;align-items:center;justify-content:flex-end;padding:0 6px 0 0;font:italic bold 14px "Liberation Serif",serif;color:#333;border-right:1px solid #8f959d;background:#e3e6eb}
.v{background:#fff}.d{display:flex;align-items:center;justify-content:center;background:#e9ecf0;border-left:1px solid #8f959d}`,
`<div class="f">${T(12,"fx")}</div><div class="v"></div><div class="d">${ic("cdn","transform:scale(.8)")}</div>`);

/* ---------- sheet ---------- */
def("sheet-grid",`:host{display:block;width:693px;height:521px;overflow:hidden;position:relative;background:#fff;font:13px "Open Sans","Noto Sans",sans-serif;color:#000}
.r{display:grid;grid-template-columns:26px 92px 146px 165px 146px 118px;height:20px}
.r>*{border-right:1px solid #d5d8dc;border-bottom:1px solid #d5d8dc;overflow:hidden;white-space:nowrap;padding:2px 2px 0 2px;display:flex;align-items:center;line-height:17px}
.r>.h{background:#dfe3e8;border-color:#a5acb5;justify-content:center;color:#333;padding:2px 0 0}
.top>*{background:#dfe3e8!important;border-color:#a5acb5!important;justify-content:center;color:#444}
.n{justify-content:flex-end}
.b>:not(.h){background:#dce6f1;border-color:#dce6f1;font-weight:bold}.b.one>:not(.h){border-bottom-color:#95b3d7}.pre>:not(.h){border-bottom-color:#95b3d7}
.fb{width:15px;height:14px;border:1px solid #aab2bd;background:#f0f2f5;display:flex;align-items:center;justify-content:center;margin:-2px 0 0 auto;color:#555}`,()=>{
let s=`<div class="r top"><div></div><div></div><div></div><div>C</div><div>D</div><div style="padding-left:50px">E</div></div>`;
const data={2:["100","1146","1228","1168"],3:["200","2634","2820","2678"],4:["300","4360","4635","4442"],5:["400","6172","6520","6212"],6:["500","8042","8458","8090"]};
const nm=t=>T(t.length*7.100-(t.includes(",")?3.200:0),t);
for(let i=1;i<=25;i++){
 if(i===1)s+=`<div class="r b one"><div class="h">1</div><div>${T(69,"Row Labels")}<span class="fb">${ic("dn")}</span></div><div>${T(138,"Average of asignari_f1")}</div><div>${T(155,"Average of comparatii_f1")}</div><div>${T(138,"Average of asignari_f2")}</div><div>${T(115.500,"Average of compar")}</div></div>`;
 else if(i===7)s+=`<div class="r b"><div class="h">7</div><div>${T(72,"Grand Total")}</div><div class="n">${nm("4470,8")}</div><div class="n">${nm("4732,2")}</div><div class="n">${nm("4518")}</div><div></div></div>`;
 else{const d=data[i];s+=`<div class="r${i===6?" pre":""}"><div class="h">${i}</div>`+(d?`<div>${nm(d[0])}</div>`+d.slice(1).map(v=>`<div class="n">${nm(v)}</div>`).join(""):"<div></div>".repeat(4))+"<div></div></div>";}
}
return s+`<slot></slot>`});
def("chip-label",`:host{display:flex;align-items:center;height:18px;padding:0 3px;border:1px solid #b0b0b0;border-radius:4px;background:linear-gradient(#d9d9d9,#bdbdbd);color:#3b3b3b;font:11px "Noto Sans",sans-serif;flex:none}`,"<slot></slot>");
def("pivot-chart",`:host{display:block;position:absolute;left:54px;top:177px;width:645px;height:303px;border:1px solid #d2d4d6;border-radius:4px;background:linear-gradient(90deg,#e9eaeb,#f3f3f3);padding:6px 8px 6px 5px;z-index:2}
.in{position:relative;width:630px;height:289px;background:#fff;border:1px solid #9b9b9b;border-radius:8px}
.top{display:flex;padding:7px 0 0 10px}
.mid{display:grid;grid-template-columns:442px 177px}
.lg{padding-top:60px;font:11.700px "Open Sans",sans-serif;color:#000}.e{display:flex;align-items:center;height:24px;padding-left:4px}.e i{width:28px;height:3px;border-radius:2px;margin-right:1px}
svg{display:block}.dots{position:absolute;width:14px;height:4px;background:radial-gradient(circle,#aaa 1px,transparent 1.300px) 0 0/4px 4px}`,()=>{
const y=v=>(202-v*.0187),xs=[91,165.500,240,315,389];
const ser=[["#4a7ebb",[1146,2634,4360,6172,8042]],["#be4b48",[1228,2820,4635,6520,8458]],["#98b954",[1168,2678,4442,6212,8090]],["#7d60a0",[1255,2880,4730,6640,8600]]];
let s="";
for(let i=0;i<=10;i++){const g=Math.round(y(i*1000))+.5;s+=`<path d="M50 ${g}h377" stroke="#868686"/><text x="42" y="${g+4}" text-anchor="end" textLength="${i===10?33:i?26.500:6.700}">${i*1000}</text>`;}
for(let i=0;i<6;i++)s+=`<path d="M${Math.round(53+i*74.600)+.5} 202v5" stroke="#868686"/>`;
s+=`<path d="M53.500 15v188" stroke="#868686"/>`;
xs.forEach((x,i)=>s+=`<text x="${x}" y="224.500" text-anchor="middle" textLength="20.500">${(i+1)*100}</text>`);
ser.forEach(([c,v])=>s+=`<polyline points="${v.map((q,i)=>xs[i]+","+(y(q)+.5)).join(" ")}" fill="none" stroke="${c}" stroke-width="3"/>`);
const lab=["Average of asignari_f1","Average of comparatii_f1","Average of asignari_f2","Average of comparatii_f2"];
return `<div class="in"><div class="top">`+[110,123,109,123].map((w,i)=>`<chip-label style="width:${[118.500,130.500,117,130][i]}px">${T(w,lab[i])}</chip-label>`).join("")+`</div>
<div class="mid"><svg width="442" height="234" style="overflow:visible" font-family="Open Sans" font-size="11.700">${s}</svg><div class="lg"><chip-label style="margin-bottom:1px">${T(32,"Values")}</chip-label>`+ser.map((q,i)=>`<div class="e"><i style="background:${q[0]}"></i>${T([121,137,121,137][i],lab[i])}</div>`).join("")+`</div></div>
<chip-label style="width:30px;margin:1px 0 0 10px">${T(6,"n")}${ic("dn","margin-left:8px;transform:scale(1.4)")}</chip-label></div>
<div class="dots" style="left:314px;top:1px"></div><div class="dots" style="left:314px;bottom:1px"></div><div class="dots" style="left:0;top:143px;width:4px;height:14px"></div><div class="dots" style="left:1px;top:1px;width:8px"></div><div class="dots" style="left:1px;bottom:1px;width:8px"></div>`});
def("sheet-scroll",`:host{display:flex;flex-direction:column;align-items:center;width:16px;height:521px;background:#e3e6ec;color:#444}
.sp{width:14px;height:8px;border:1px solid #858b93;background:#fff;display:flex;align-items:center;justify-content:center}.sp i{width:8px;height:2px;border:1px solid #777;border-bottom:0}
.th{width:15px;height:459px;border:1px solid #858d99;border-radius:1px;background:linear-gradient(90deg,#f6f7f9,#dfe3ea);display:flex;align-items:center;justify-content:center;margin-top:4px}`,
`<div class="sp"><i></i></div>${ic("up","margin-top:7px")}<div class="th">${ic("vgrip")}</div>${ic("dnw","margin-top:26px")}`);
def("sheet-tabs",`:host{display:flex;height:16px;background:#dfe3e9;border-top:1px solid #a5acb5;border-bottom:1px solid #858b93;align-items:center;color:#4e5660;flex:none}
.nav{display:flex;width:63px;height:100%;align-items:center;justify-content:space-around;border-right:1px solid #858b93;background:#e3e6ec}
.t{height:100%;display:flex;align-items:center}.a{background:#fff;width:68px;padding-left:9px;clip-path:polygon(0 0,100% 0,82% 100%,0 100%)}
.sp{width:8px;height:14px;border:1px solid #858b93;background:#fff;display:flex;align-items:center;justify-content:center;flex:none}.sp i{width:2px;height:8px;background:#999}
.th{width:170px;height:15px;border:1px solid #858d99;border-radius:2px;background:linear-gradient(#f8f9fb,#dde1e8);display:flex;align-items:center;justify-content:center}
.sl{width:12px;height:15px;flex:none}`,(()=>{const sl=(m)=>`<svg class="sl" style="margin:${m}" width="12" height="15"><path d="M0 14L11.500 0" stroke="#8f98a4"/></svg>`;return `
<div class="nav">${ic("first")}${ic("prev")}${ic("next")}${ic("last")}</div><div class="t a">${T(43,"Sheet1","font-weight:bold;font-size:12.5px")}</div>${sl("0 0 0 -10px")}<div class="t">${T(22,"test","font-size:12px")}</div>${sl("0 0 0 6px")}${ic("newsheet","margin:0 5px 0 2px")}${sl("0")}
<span class="sp" style="margin-left:209px"><i></i></span>${ic("lf","margin:0 6px 0 5px")}<div class="th">${ic("hgrip")}</div>${ic("rt","margin-left:64px")}<span class="sp" style="margin-left:6px"><i></i></span>`})());

/* ---------- field list ---------- */
def("field-pill",`:host{display:flex;align-items:center;height:17px;margin:1px 1px 0 1px;border:1px solid #f0cd62;border-radius:3px;background:linear-gradient(#fffdf6,#fdeecb);color:#444;padding:0 8px 0 5px;justify-content:space-between;flex:none;font-size:11px}`,`<slot></slot>${ic("dnw")}`);
def("drop-zone",`:host{display:flex;flex-direction:column;border:1px solid #a0a6ae;background:#fff;overflow:hidden;padding-top:1px}`,"<slot></slot>");
def("field-pane",`:host{display:block;width:246px;height:537px;background:#ebeef3;border-left:1px solid #858d99;border-bottom:1px solid #858d99;border-top:2px solid #f8f9fb;padding:1px 3px 0 2px;font-size:11px;color:#111}
.hd{height:22px;background:#cdd3db;display:flex;align-items:center;padding:0 7px 0 1px;color:#3b3b3b;justify-content:space-between}
.row{display:flex;justify-content:space-between;padding:8px 7px 0 6px;align-items:flex-start;height:40px}
.btn{width:41px;height:24px;border:1px solid #acacac;background:#e2e2e2;display:flex;align-items:center;justify-content:center;gap:8px;color:#111}
.list{height:211px;margin:0 6px;border:1px solid #9fa4ab;background:#fff;padding:0 0 0 2px;font-weight:bold;font-size:11px;color:#000}
.list div{height:18px;display:flex;align-items:center;gap:2px}
.sp{height:5px;background:linear-gradient(#fff,#f4f4f4);margin:7px 0 6px}
.zones{display:grid;grid-template-columns:110px 110px;column-gap:9px;grid-template-rows:17px 75px 24px 74px;margin:1px 6px 0}
.lb{display:flex;align-items:center;gap:9px}
.vs{display:grid;grid-template-columns:1fr 17px;height:74px}.sb{display:flex;flex-direction:column;align-items:center;justify-content:space-between;padding:6px 0 6px;background:#f1f1f1}.sb i{width:15px;height:37px;background:#cdcdcd;margin-right:1px}
.ft{display:flex;align-items:center;margin:4px 7px 0 6px;gap:6px}.up{margin-left:auto;width:73px;height:21px;background:#ccc;border:1px solid #bfbfbf;color:#8b8b8b;display:flex;align-items:center;justify-content:center}`,
`<div class="hd">${T(105,"PivotTable Field List","font-size:11.5px")}<span style="display:flex;gap:10px;align-items:center">${ic("dnw","transform:scale(1.600,1.500);margin-right:4px;color:#444")}${ic("px")}</span></div>
<div class="row">${T(148,"Choose fields to add to report:","margin-top:11px")}<div class="btn">${ic("fields")}${ic("dn","transform:scale(1.200)")}</div></div>
<div class="list">${[["n",7],["asignari_f1",63],["comparatii_f1",79],["asignari_f2",63],["comparatii_f2",79]].map(a=>`<div>${ic("chk")}${T(a[1],a[0],"margin-top:-1px")}</div>`).join("")}</div>
<div class="sp"></div><div style="height:15px;padding-left:6px;display:flex;align-items:center">${T(161,"Drag fields between areas below:")}</div>
<div class="zones"><div class="lb">${ic("filter","margin-right:1px")}${T(60,"Report Filter")}</div><div class="lb">${ic("cols")}${T(80,"Legend Fields ...")}</div><drop-zone style="margin-top:3px;margin-bottom:-3px"></drop-zone><drop-zone style="margin-top:3px;margin-bottom:-3px"><field-pill style="height:20px;margin-top:0"><span style="display:flex;gap:6px;padding-left:3px"><b style="color:#111;font-size:13px;line-height:15px">Σ</b>${T(32,"Values")}</span></field-pill></drop-zone>
<div class="lb" style="padding-top:3px">${ic("rows")}${T(82,"Axis Fields (Ca...")}</div><div class="lb" style="padding:3px 0 0 2px;gap:15px"><b style="font-size:13px;line-height:14px">Σ</b>${T(32,"Values")}</div>
<drop-zone><field-pill style="margin-top:0;height:18px;padding-right:11px">${T(6,"n")}</field-pill></drop-zone><drop-zone style="padding-top:0"><div class="vs"><div>${`<field-pill style="height:17px;margin-right:1px;padding:0 6px 0 5px">${T(56,"Average ...")}</field-pill>`.repeat(4)}</div><div class="sb">${ic("cup")}<i></i>${ic("cdn")}</div></div></drop-zone></div>
<div class="ft">${ic("box")}${T(101,"Defer Layout Update")}<div class="up">${T(35,"Update")}</div></div>`);

def("status-strip",`:host{display:flex;align-items:center;background:linear-gradient(#e9ebee,#d3d6da 45%,#b9bdc2);border-top:1px solid #fff;box-shadow:0 -1px #8a9099;flex:none;color:#3b3b3b;font-size:11.5px}`,"<slot></slot>");
def("hover-tip",`:host{display:flex;flex-direction:column;position:absolute;left:4px;top:141px;width:210px;height:50px;z-index:9;border:1px solid #767676;border-radius:3px;background:linear-gradient(#fff,#e4e5f0);box-shadow:2px 2px 3px rgba(0,0,0,.35);padding:5px 0 0 5px;color:#4c4c4c;line-height:16px}`,
`${T(99,"Change Chart Type","font-weight:600;align-self:flex-start")}${T(182,"Change to a different type of chart.","margin:7px 0 0 8px;align-self:flex-start")}`);
def("excel-window",`:host{display:flex;flex-direction:column;position:absolute;left:33px;top:0;width:957px;height:728px;border:1px solid #8fabc9;border-top-color:#9fc6ea;border-bottom:0;box-shadow:0 4px 16px 2px rgba(0,0,0,.5);background:#fff;z-index:2}
.m{display:grid;grid-template-columns:709px 1fr;height:537px;flex:none}.s{display:grid;grid-template-columns:693px 16px;height:521px}`,
`<excel-titlebar></excel-titlebar><excel-tabs></excel-tabs><excel-ribbon></excel-ribbon><formula-bar></formula-bar>
<div class="m"><div><div class="s"><sheet-grid><pivot-chart></pivot-chart></sheet-grid><sheet-scroll></sheet-scroll></div><sheet-tabs></sheet-tabs></div><field-pane></field-pane></div>
<status-strip style="height:22px;margin-top:1px;padding-bottom:2px">${T(31,"Ready","margin-left:8px")}<i style="width:1px;height:18px;background:#888;margin-left:9px;box-shadow:1px 0 #fff"></i><i style="width:1px;height:18px;background:#888;margin-left:650px;box-shadow:1px 0 #fff"></i><view-toggle on style="margin-left:3px">${ic("vgrid")}</view-toggle><view-toggle>${ic("vpage")}</view-toggle><view-toggle>${ic("vbreak")}</view-toggle>${T(27,"100%","margin:0 8px 0 9px")}<zoom-slider></zoom-slider>${ic("grip","margin:9px 0 0 8px")}</status-strip><hover-tip></hover-tip>`);

/* ---------- word ---------- */
def("word-ruler",":host{display:block}svg{display:block}",()=>{
let s='<rect x=".5" y="-1" width="12" height="560" fill="#f7f8f9" stroke="#7b828c"/>';
for(let n=6;n<=20;n++){const c=5+(n-6)*37.800;s+=`<text transform="translate(10 ${c}) rotate(-90)" text-anchor="middle" font-size="9" fill="#555" font-family="Noto Sans,sans-serif">${n}</text><path d="M6 ${c+9.500}h1.500M4 ${c+18.900}h5M6 ${c+28.300}h1.500" stroke="#666"/>`}
return `<svg width="13" height="543">${s}</svg>`});
def("word-window",`:host{display:flex;flex-direction:column;position:absolute;left:0;top:0;width:1366px;height:728px;background:#fff}
.t{height:25px;display:flex;justify-content:space-between;padding:3px 20px 0 1px;color:#9a9a9a;flex:none}
.t span{display:flex;align-items:center}.tabs{height:24px;display:flex;justify-content:space-between;align-items:center;border-bottom:1px solid #8a9298;padding-right:2px;flex:none}
.file{width:50px;height:24px;background:linear-gradient(#3b76c8,#2559b0 50%,#3e7fd0);border-radius:3px 3px 0 0;border:1px solid #1d4c95;color:#fff;padding:3px 0 0 18px;font-weight:500}
.rb{height:86px;display:flex;justify-content:space-between;background:linear-gradient(#fff,#fbfcfd 40%,#e9ecf0 95%);border-bottom:1px solid #858b92;flex:none;--sep:#b4b8bd}
.pa{width:50px;padding:4px 0 0 11px;display:flex;flex-direction:column;align-items:flex-start;gap:4px}
.right{display:flex;width:426px}.gal{display:flex;border:1px solid #c5c8cc;border-right:0;width:220px;height:60px;margin-top:5px;background:#fff;color:#333;flex:none}
.gal div{display:flex;flex-direction:column;align-items:center;justify-content:space-between;padding:2px 0 6px;flex:none}
.ed{display:flex;flex-direction:column;justify-content:space-around;padding:2px 0 4px 8px}.ed span{display:flex;align-items:center;gap:5px;height:20px}
.doc{flex:1;display:grid;grid-template-columns:1349px 17px;background:linear-gradient(#cdd0d4,#b7babf);min-height:0}
.l{display:grid;grid-template-rows:27px 1fr;grid-template-columns:26px 1058px 1fr}
.cn{margin:3px 1px 0 0;border:1px solid #858b93;display:flex;align-items:center;justify-content:center;background:#cfd2d6}.cn b{width:14px;height:14px;border:1px solid #777;background:#fff;display:flex;align-items:center;justify-content:center}.cn b i{width:5px;height:5px;border-left:2px solid #444;border-bottom:2px solid #444}
.hr{align-self:center;margin-top:2px;height:13px;border:1px solid #7b828c;background:#d3d6da;display:flex;justify-content:flex-end;align-items:center;font-size:9.500px;color:#555;padding-right:9px}
.page{background:#fff}.sh{width:14px;background:linear-gradient(90deg,#9a9da1,transparent)}
.sb{display:flex;flex-direction:column;align-items:center;background:#dde1ea;padding-top:3px;color:#444}
.th{width:15px;height:34px;border:1px solid #858d99;background:linear-gradient(90deg,#f8f9fb,#dde1e8);display:flex;align-items:center;justify-content:center}`,
`<div class="t"><span style="align-self:flex-start">${ic("word")}<i style="width:1px;height:12px;background:#999;margin:0 8px 0 4px"></i>${ic("save")}</span><span style="gap:34px;height:22px">${ic("min")}${ic("restore")}${ic("close")}</span></div>
<div class="tabs"><div class="file">${T(19,"File")}</div><span style="display:flex;gap:9px;align-items:center">${ic("chev")}${ic("help")}</span></div>
<div class="rb"><div class="pa">${ic("paste")}${T(28,"Paste","line-height:14px")}${ic("dn","margin-left:10px")}</div>
<div class="right"><ribbon-group label=" " lw="3" style="width:287px"><div class="gal"><div style="width:71px;align-items:flex-end;padding-right:2px">${T(62,"AaBbCcI","font:bold 15px 'Liberation Serif',serif;margin-top:11px;color:#4f81bd")}${T(48,"Heading 3","margin-right:2px")}</div><div style="width:79px">${T(57,"AaB","font:29px 'Liberation Serif',serif;color:#17365d;line-height:34px")}${T(21,"Title")}</div><div style="width:68px">${T(60,"AaBbCcI","font:italic 15px 'Liberation Serif',serif;color:#4f81bd;margin-top:11px")}${T(40,"Subtitle")}</div></div><gallery-scroll style="margin-top:5px;height:60px"></gallery-scroll>
<div style="width:51px;display:flex;flex-direction:column;align-items:center;padding-top:7px;line-height:13px;color:#3c3c3c">${ic("styles","margin-bottom:5px")}${T(39,"Change")}<span style="display:flex;align-items:center;gap:4px">${T(28,"Styles")}${ic("dn")}</span>${ic("launch","margin:7px 0 0 34px")}</div></ribbon-group>
<ribbon-group label="Editing" lw="37" style="width:75px"><div class="ed"><span>${ic("find")}${T(22,"Find")}${ic("dn")}</span><span>${ic("repl","margin-right:-1px")}${T(39,"Replace")}</span><span>${ic("sel","margin:0 3px 0 2px")}${T(29,"Select")}${ic("dn","margin-left:-1px")}</span></div></ribbon-group></div></div>
<div class="doc"><div class="l"><div class="cn"><b><i></i></b></div><div class="hr">${T(97,"·  16  ·  |  ·  17  ·  |  ·  18  ·")}</div><div></div>
<word-ruler style="padding-left:6px"></word-ruler><div class="page"></div><div class="sh"></div></div>
<div class="sb"><i style="width:9px;height:2px;background:#777;margin:2px 0 2px"></i><i style="border:1px solid #777;width:16px;height:16px;display:flex;align-items:center;justify-content:center">${ic("wobj")}</i>${ic("up","margin-top:7px")}<div class="th" style="margin-top:411px">${ic("vgrip")}</div>${ic("dnw","margin-top:27px")}<i style="height:1px;width:17px;background:#b4b8c0;margin:5px 0 4px"></i>
<svg width="9" height="52"><path d="M4.500 0l3 3h-6zM4.500 3l3 3h-6z" fill="#444"/><path d="M2 7.500h5M2 35.500h5" stroke="#444"/><circle cx="4.500" cy="20" r="3.200" fill="#cfd2d8" stroke="#666"/><path d="M4.500 42l3-3h-6zM4.500 39l3-3h-6z" fill="#444"/></svg></div></div>
<status-strip style="height:22px">${T(25,"Page","margin-left:8px")}<i style="width:1px;height:18px;background:#888;margin-left:1055px;box-shadow:1px 0 #fff"></i><view-toggle on style="margin-left:3px">${ic("wprint")}</view-toggle><view-toggle>${ic("wread")}</view-toggle><view-toggle style="width:18px">${ic("wweb")}</view-toggle><view-toggle>${ic("wout")}</view-toggle><view-toggle>${ic("wdraft")}</view-toggle>${T(27,"100%","margin:0 8px 0 9px")}<zoom-slider></zoom-slider></status-strip>`);

/* ---------- taskbar ---------- */
def("task-button",`:host{display:flex;align-items:center;justify-content:center;width:49px;height:40px;flex:none;position:relative}
:host([run])::after{content:"";position:absolute;left:4px;right:5px;bottom:0;height:2px;background:#76b9ed}
:host([many])::after{background:linear-gradient(90deg,#76b9ed 31px,#4f7fa6 31px)}
:host([on]){background:#3d3d3d}:host([on])::after{left:0;right:0}`,"<slot></slot>");
def("task-bar",`:host{display:flex;position:absolute;left:0;top:728px;width:1366px;height:40px;background:#050705;color:#fff;font-size:11.5px;z-index:3;background-image:linear-gradient(90deg,rgba(25,35,20,.45),transparent 25%,rgba(20,30,15,.3) 70%,rgba(25,30,20,.4))}
.tray{margin-left:auto;display:flex;align-items:center}.ck{display:flex;flex-direction:column;align-items:center;line-height:17px}
.bg{position:absolute;left:130px;top:2px;color:#1c1e1c;font:300 25px/38px "Open Sans",sans-serif}`,
`<div class="bg">${T(176,"AN RUSHTON")}</div><task-button style="width:48px">${ic("start")}</task-button><task-button>${ic("taskview")}</task-button><task-button style="width:50px">${ic("edge")}</task-button><task-button>${ic("chrome")}</task-button>
<task-button run many>${ic("firefox")}</task-button><task-button run many>${ic("folder")}</task-button><task-button run>${ic("npp")}</task-button><task-button>${ic("outlook")}</task-button><task-button run many>${ic("pidgin")}</task-button><task-button run many>${ic("wordbig")}</task-button><task-button run>${ic("putty")}</task-button><task-button run>${ic("cpanel")}</task-button><task-button run>${ic("clion")}</task-button><task-button run on style="width:48px">${ic("excelbig")}</task-button>
<div class="tray">${ic("tup","margin-right:10px")}${ic("batt","margin-right:7px")}${ic("net","margin-right:7px")}${ic("vol","margin-right:10px")}${ic("act","margin-right:14px")}<div class="ck">${T(27,"17:52")}${T(54,"21.02.2016")}</div><i style="width:1px;height:40px;background:#444;margin:0 4px 0 11px"></i></div>`);
def("desktop-shell",":host{display:block;position:relative;width:1366px;height:768px;overflow:hidden}","<word-window></word-window><excel-window></excel-window><task-bar></task-bar>");

fits.forEach(e=>{
  const w=+e.getAttribute("w"),n=[...e.textContent].length,cur=e.getBoundingClientRect().width;
  if(cur)e.style.letterSpacing=((w-cur)/n).toFixed(3)+"px";
});
</script>
</body>
</html>
